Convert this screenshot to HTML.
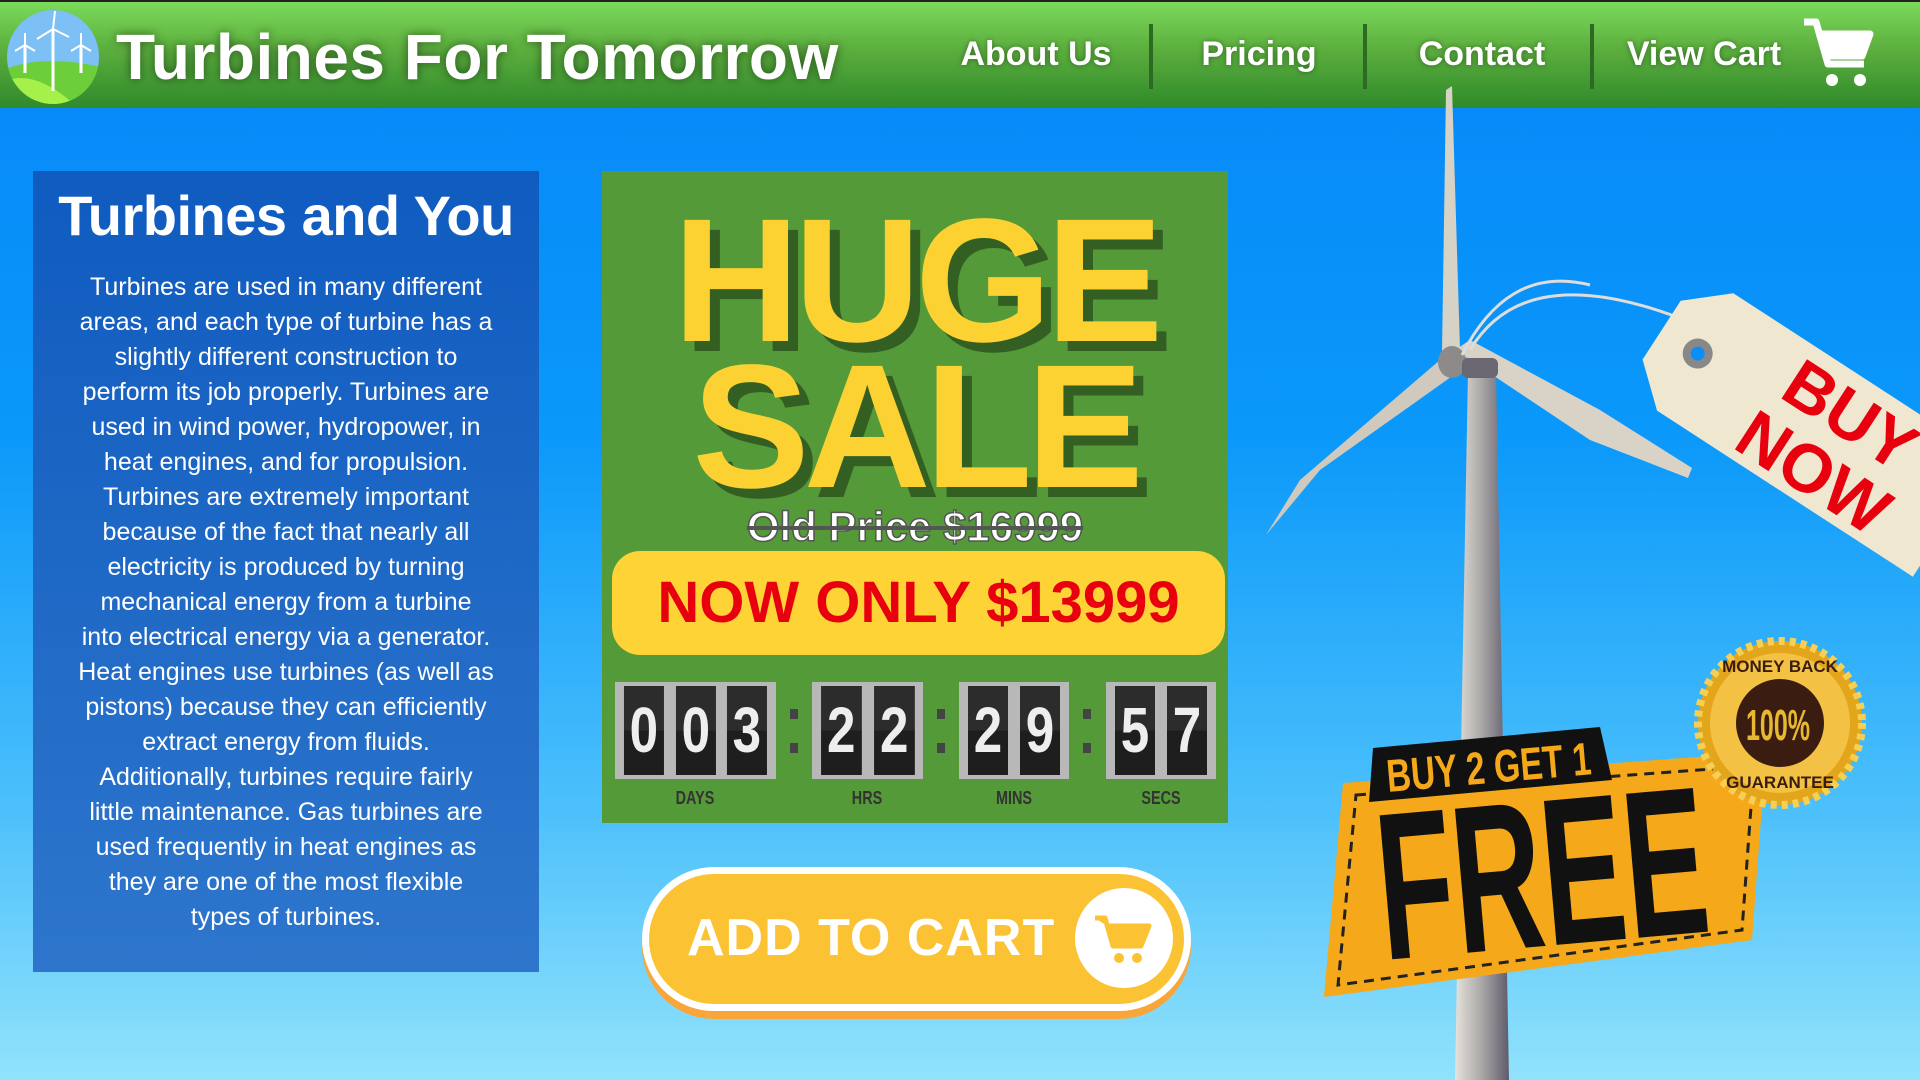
<!DOCTYPE html>
<html><head><meta charset="utf-8"><style>
*{margin:0;padding:0;box-sizing:border-box}
body{width:1920px;height:1080px;overflow:hidden;font-family:"Liberation Sans",sans-serif;background:linear-gradient(180deg,#0686f8 0%,#0a98fa 40%,#4cc0fb 75%,#92e2fb 100%);position:relative}
.hdr{position:absolute;left:0;top:0;width:1920px;height:108px;background:linear-gradient(180deg,#7bda5a 0%,#5cae3e 45%,#2f8a2b 100%);border-top:2px solid #222}
.title{position:absolute;left:116px;top:18px;font-size:64px;font-weight:bold;color:#fff;text-shadow:0 0 10px rgba(0,0,0,.5);letter-spacing:0.5px}
.nav{position:absolute;top:33px;font-size:34px;font-weight:bold;color:#fff;text-shadow:0 0 6px rgba(0,0,0,.4);transform:translateX(-50%)}
.sep{position:absolute;top:22px;width:4px;height:65px;background:#2d6a22}
.box{position:absolute;left:33px;top:171px;width:506px;height:801px;background:linear-gradient(180deg,#0f5bbf,#2e76cc);color:#fff;text-align:center}
.box h1{font-size:56px;font-weight:bold;margin-top:12px;letter-spacing:-0.5px}
.box p{font-size:25px;line-height:35px;margin-top:22px;white-space:nowrap}
.sale{position:absolute;left:602px;top:171px;width:626px;height:652px;background:#549a38}
.big{position:absolute;left:0;width:626px;text-align:center;font-size:176px;font-weight:900;color:#fcd232;letter-spacing:-6px;text-shadow:10px 10px 0 #335f22;line-height:1}
.old{position:absolute;top:332px;width:626px;text-align:center;font-size:42px;font-weight:bold;color:#fff;text-decoration:line-through;-webkit-text-stroke:1.5px #555}
.pill{position:absolute;left:10px;top:380px;width:613px;height:104px;background:#fdd335;border-radius:28px;color:#e8000e;font-size:58px;font-weight:bold;text-align:center;line-height:104px}
.cd{position:absolute;top:511px;height:97px;background:#b8b8b8;padding:4px;display:flex;gap:2px}
.cd span{flex:1;background:linear-gradient(180deg,#2c2c2c 50%,#1e1e1e 50%);color:#eee;font-size:64px;font-weight:bold;text-align:center;line-height:89px;transform:scaleX(.8)}
.lbl{position:absolute;top:617px;font-size:18px;color:#333;transform:translateX(-50%) scaleX(.8);font-weight:bold}
.colon{position:absolute;top:538px;width:8px;height:44px;border-top:10px solid #444;border-bottom:10px solid #444}
.atc{position:absolute;left:642px;top:867px;width:549px;height:144px;border-radius:72px;background:#fbc334;border:7px solid #fff;box-shadow:0 8px 0 #f8a63a}
.atc b{position:absolute;left:38px;top:34px;font-size:52px;color:#fff;letter-spacing:1px}
.atc i{position:absolute;left:426px;top:14px;width:98px;height:100px;border-radius:50%;background:#fff}
</style></head><body>
<div class="hdr">
<svg style="position:absolute;left:5px;top:7px" width="96" height="96" viewBox="0 0 96 96"><defs><clipPath id="c"><ellipse cx="48" cy="48" rx="46" ry="47"/></clipPath></defs><g clip-path="url(#c)"><rect width="96" height="96" fill="#7cc0f5"/><path d="M0 60 Q40 45 96 58 V96 H0Z" fill="#6ccf3a"/><path d="M0 72 Q30 60 70 96 H0Z" fill="#a6f04a"/><g stroke="#fff" stroke-width="3"><line x1="48" y1="20" x2="48" y2="82"/><line x1="20" y1="36" x2="20" y2="64"/><line x1="76" y1="36" x2="76" y2="64"/></g><g stroke="#fff" stroke-width="2"><line x1="48" y1="20" x2="50" y2="2"/><line x1="48" y1="20" x2="32" y2="30"/><line x1="48" y1="20" x2="64" y2="28"/><line x1="20" y1="36" x2="20" y2="24"/><line x1="20" y1="36" x2="10" y2="42"/><line x1="20" y1="36" x2="30" y2="42"/><line x1="76" y1="36" x2="76" y2="24"/><line x1="76" y1="36" x2="66" y2="42"/><line x1="76" y1="36" x2="86" y2="42"/></g></g></svg>
<div class="title">Turbines For Tomorrow</div>
<div class="nav" style="left:1036px">About Us</div>
<div class="sep" style="left:1149px"></div>
<div class="nav" style="left:1259px">Pricing</div>
<div class="sep" style="left:1363px"></div>
<div class="nav" style="left:1482px">Contact</div>
<div class="sep" style="left:1590px"></div>
<div class="nav" style="left:1704px">View Cart</div>
<svg style="position:absolute;left:1802px;top:16px" width="72" height="72" viewBox="0 0 72 72"><path d="M2 4 H14 L26 46 H62 M18 16 H68 L60 38 H24" fill="none" stroke="#fff" stroke-width="7" stroke-linejoin="round"/><path d="M18 16 H68 L60 38 H24Z" fill="#fff"/><circle cx="30" cy="62" r="6" fill="#fff"/><circle cx="58" cy="62" r="6" fill="#fff"/></svg>
</div>

<svg style="position:absolute;left:0;top:0" width="1920" height="1080">
<defs><linearGradient id="tw" x1="0" x2="1"><stop offset="0" stop-color="#e6e3dc"/><stop offset=".5" stop-color="#a9a6a6"/><stop offset="1" stop-color="#5f5b6b"/></linearGradient></defs>
<polygon points="1468,370 1496,370 1509,1080 1455,1080" fill="url(#tw)"/>
<polygon points="1446,90 1452,86 1460,350 1442,352" fill="#d6d2c6"/>
<polygon points="1440,360 1458,372 1320,470 1266,535 1300,480" fill="#cfcabd"/>
<polygon points="1455,350 1470,340 1600,410 1692,468 1688,478 1590,440" fill="#d8d3c6"/>
<ellipse cx="1452" cy="362" rx="14" ry="16" fill="#8e8a8a"/>
<rect x="1462" y="358" width="36" height="20" rx="6" fill="#6a6672"/>
<path d="M1462 355 C1490 300 1530 270 1590 285 M1470 350 C1500 300 1560 270 1690 322" stroke="#ddd" stroke-width="3" fill="none"/>
<g transform="translate(10 20) rotate(33 1790 400)"><path d="M1665 330 H1970 V470 H1665 L1625 435 V365Z" fill="#efe7cf"/><circle cx="1668" cy="400" r="15" fill="#888"/><circle cx="1668" cy="400" r="7" fill="#0a8ff8"/><text x="1830" y="392" font-family="Liberation Sans" font-weight="bold" font-size="68" fill="#e8000e" text-anchor="middle">BUY</text><text x="1830" y="460" font-family="Liberation Sans" font-weight="bold" font-size="68" fill="#e8000e" text-anchor="middle">NOW</text></g>
<polygon points="1343,783 1766,752 1752,940 1324,997" fill="#f5a81a"/>
<polygon points="1356,795 1754,766 1742,930 1338,985" fill="none" stroke="#222" stroke-width="3" stroke-dasharray="10 7"/>
<polygon points="1373,748 1600,727 1612,780 1369,802" fill="#111"/>
<text x="1388" y="792" font-family="Liberation Sans" font-weight="bold" font-size="46" fill="#f5a81a" transform="rotate(-5 1388 792)" textLength="205" lengthAdjust="spacingAndGlyphs">BUY 2 GET 1</text>
<text x="1384" y="960" font-family="Liberation Sans" font-weight="900" font-size="210" fill="#111" transform="rotate(-5 1384 960)" textLength="330" lengthAdjust="spacingAndGlyphs">FREE</text>
<circle cx="1780" cy="723" r="82" fill="#e2a51c" stroke="#f6cf53" stroke-width="8" stroke-dasharray="6 5"/>
<circle cx="1780" cy="723" r="70" fill="#f3c245"/>
<circle cx="1780" cy="723" r="44" fill="#3a1d10"/>
<text x="1778" y="740" font-family="Liberation Sans" font-weight="bold" font-size="44" fill="#e8b830" text-anchor="middle" textLength="64" lengthAdjust="spacingAndGlyphs">100%</text>
<text x="1780" y="672" font-family="Liberation Sans" font-weight="bold" font-size="17" fill="#3a1d10" text-anchor="middle">MONEY BACK</text>
<text x="1780" y="788" font-family="Liberation Sans" font-weight="bold" font-size="17" fill="#3a1d10" text-anchor="middle">GUARANTEE</text>
</svg>

<div class="box"><h1>Turbines and You</h1><p>Turbines are used in many different<br>areas, and each type of turbine has a<br>slightly different construction to<br>perform its job properly. Turbines are<br>used in wind power, hydropower, in<br>heat engines, and for propulsion.<br>Turbines are extremely important<br>because of the fact that nearly all<br>electricity is produced by turning<br>mechanical energy from a turbine<br>into electrical energy via a generator.<br>Heat engines use turbines (as well as<br>pistons) because they can efficiently<br>extract energy from fluids.<br>Additionally, turbines require fairly<br>little maintenance. Gas turbines are<br>used frequently in heat engines as<br>they are one of the most flexible<br>types of turbines.</p></div>

<div class="sale">
<div class="big" style="top:22px">HUGE</div>
<div class="big" style="top:168px">SALE</div>
<div class="old">Old Price $16999</div>
<div class="pill">NOW ONLY $13999</div>
<div class="cd" style="left:13px;width:161px"><span>0</span><span>0</span><span>3</span></div>
<div class="colon" style="left:188px"></div>
<div class="cd" style="left:210px;width:111px"><span>2</span><span>2</span></div>
<div class="colon" style="left:335px"></div>
<div class="cd" style="left:357px;width:110px"><span>2</span><span>9</span></div>
<div class="colon" style="left:481px"></div>
<div class="cd" style="left:504px;width:110px"><span>5</span><span>7</span></div>
<div class="lbl" style="left:93px">DAYS</div>
<div class="lbl" style="left:265px">HRS</div>
<div class="lbl" style="left:412px">MINS</div>
<div class="lbl" style="left:559px">SECS</div>
</div>

<div class="atc"><b>ADD TO CART</b><i><svg style="position:absolute;left:18px;top:26px" width="62" height="52" viewBox="0 0 62 52"><path d="M2 4 H12 L20 32 H48 L56 12 H14" fill="#fbc334" stroke="#fbc334" stroke-width="5" stroke-linejoin="round"/><circle cx="26" cy="44" r="5" fill="#fbc334"/><circle cx="44" cy="44" r="5" fill="#fbc334"/></svg></i></div>
</body></html>
